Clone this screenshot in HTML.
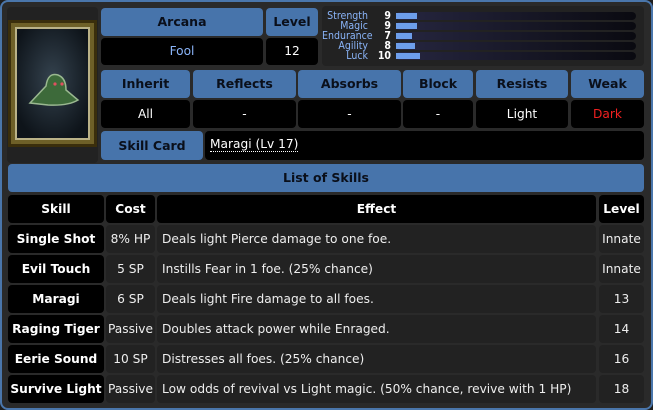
<!DOCTYPE html>
<html><head><style>
*{box-sizing:border-box;margin:0;padding:0}
body{width:653px;height:410px;background:#1e1e1e;font-family:"DejaVu Sans","Liberation Sans",sans-serif;font-size:12.2px;position:relative;overflow:hidden}
.frame{position:absolute;left:0;top:0;width:653px;height:410px;border:2px solid #4a76ab;border-radius:8px;background:#2a2a2a}
.c{position:absolute;border-radius:4px;display:flex;align-items:center;justify-content:center;text-align:center;padding-bottom:1px}
.h{background:#4774ab;color:#0a0f1a;font-weight:bold;font-size:12.5px}
.b{background:#000;color:#fff}
.d{background:#222;color:#eee}
.l{justify-content:flex-start;padding-left:5px}
.st{position:absolute;font-family:"DejaVu Sans Condensed","Liberation Sans Narrow",sans-serif;font-size:10.5px;color:#8ab4f8;line-height:10px}
.bar{position:absolute;left:396px;width:240px;height:8px;border-radius:4px;background:linear-gradient(90deg,#262640,#0a0a10)}
.bar i{position:absolute;left:0;top:1px;height:6px;background:#6d9eeb}
</style></head><body>
<div class="frame"></div>
<div class="c" style="left:7px;top:7px;width:91px;height:156px;background:#222"></div>
<svg style="position:absolute;left:8px;top:20px" width="89" height="127">
<defs><radialGradient id="g" cx="50%" cy="45%" r="60%"><stop offset="0" stop-color="#34424e"/><stop offset="1" stop-color="#0e141a"/></radialGradient></defs>
<rect width="89" height="127" fill="#3a2e0c"/><rect x="3" y="3" width="83" height="121" fill="#6e6028"/>
<rect x="7" y="7" width="75" height="113" fill="#bab288"/><rect x="9" y="9" width="71" height="109" fill="url(#g)"/>
<path d="M22 83 L38 66 Q40 52 50 55 Q58 58 58 70 L70 80 Q60 86 40 85 Z" fill="#3d6a3a" stroke="#9ab890" stroke-width="1.5"/>
<circle cx="47" cy="64" r="1.6" fill="#e05060"/><circle cx="54" cy="64" r="1.6" fill="#e05060"/>
</svg>
<div class="c h" style="left:101px;top:8px;width:162px;height:28px">Arcana</div>
<div class="c h" style="left:266px;top:8px;width:52px;height:28px">Level</div>
<div class="c b" style="left:101px;top:38px;width:162px;height:27px;color:#8ab4f8">Fool</div>
<div class="c b" style="left:266px;top:38px;width:52px;height:27px">12</div>
<div class="c" style="left:322px;top:6px;width:322px;height:60px;background:#222"></div>
<div class="st" style="left:322px;top:11px;width:46px;text-align:right">Strength<br>Magic<br>Endurance<br>Agility<br>Luck</div>
<div class="st" style="left:375px;top:11px;width:16px;text-align:right;color:#fff;font-weight:bold">9<br>9<br>7<br>8<br>10</div>
<div class="bar" style="top:12px"><i style="width:21px"></i></div>
<div class="bar" style="top:22px"><i style="width:21px"></i></div>
<div class="bar" style="top:32px"><i style="width:16px"></i></div>
<div class="bar" style="top:42px"><i style="width:19px"></i></div>
<div class="bar" style="top:52px"><i style="width:24px"></i></div>
<div class="c h" style="left:101px;top:70px;width:89px;height:28px">Inherit</div>
<div class="c h" style="left:193px;top:70px;width:103px;height:28px">Reflects</div>
<div class="c h" style="left:298px;top:70px;width:103px;height:28px">Absorbs</div>
<div class="c h" style="left:403px;top:70px;width:70px;height:28px">Block</div>
<div class="c h" style="left:476px;top:70px;width:92px;height:28px">Resists</div>
<div class="c h" style="left:571px;top:70px;width:73px;height:28px">Weak</div>
<div class="c b" style="left:101px;top:100px;width:89px;height:28px">All</div>
<div class="c b" style="left:193px;top:100px;width:103px;height:28px">-</div>
<div class="c b" style="left:298px;top:100px;width:103px;height:28px">-</div>
<div class="c b" style="left:403px;top:100px;width:70px;height:28px">-</div>
<div class="c b" style="left:476px;top:100px;width:92px;height:28px">Light</div>
<div class="c b" style="left:571px;top:100px;width:73px;height:28px;color:#f02020">Dark</div>
<div class="c h" style="left:101px;top:131px;width:102px;height:29px">Skill Card</div>
<div class="c b l" style="left:205px;top:131px;width:439px;height:29px"><span style="border-bottom:1px dotted #fff;line-height:13px">Maragi (Lv 17)</span></div>
<div class="c h" style="left:8px;top:164px;width:636px;height:28px">List of Skills</div>
<div class="c b" style="left:8px;top:195px;width:96px;height:28px;font-weight:bold">Skill</div>
<div class="c b" style="left:106px;top:195px;width:49px;height:28px;font-weight:bold">Cost</div>
<div class="c b" style="left:157px;top:195px;width:439px;height:28px;font-weight:bold">Effect</div>
<div class="c b" style="left:599px;top:195px;width:45px;height:28px;font-weight:bold">Level</div>
<div class="c b" style="left:8px;top:225px;width:96px;height:28px;font-weight:bold">Single Shot</div>
<div class="c d" style="left:106px;top:225px;width:49px;height:28px">8% HP</div>
<div class="c d l" style="left:157px;top:225px;width:439px;height:28px">Deals light Pierce damage to one foe.</div>
<div class="c d" style="left:599px;top:225px;width:45px;height:28px">Innate</div>
<div class="c b" style="left:8px;top:255px;width:96px;height:28px;font-weight:bold">Evil Touch</div>
<div class="c d" style="left:106px;top:255px;width:49px;height:28px">5 SP</div>
<div class="c d l" style="left:157px;top:255px;width:439px;height:28px">Instills Fear in 1 foe. (25% chance)</div>
<div class="c d" style="left:599px;top:255px;width:45px;height:28px">Innate</div>
<div class="c b" style="left:8px;top:285px;width:96px;height:28px;font-weight:bold">Maragi</div>
<div class="c d" style="left:106px;top:285px;width:49px;height:28px">6 SP</div>
<div class="c d l" style="left:157px;top:285px;width:439px;height:28px">Deals light Fire damage to all foes.</div>
<div class="c d" style="left:599px;top:285px;width:45px;height:28px">13</div>
<div class="c b" style="left:8px;top:315px;width:96px;height:28px;font-weight:bold">Raging Tiger</div>
<div class="c d" style="left:106px;top:315px;width:49px;height:28px">Passive</div>
<div class="c d l" style="left:157px;top:315px;width:439px;height:28px">Doubles attack power while Enraged.</div>
<div class="c d" style="left:599px;top:315px;width:45px;height:28px">14</div>
<div class="c b" style="left:8px;top:345px;width:96px;height:28px;font-weight:bold">Eerie Sound</div>
<div class="c d" style="left:106px;top:345px;width:49px;height:28px">10 SP</div>
<div class="c d l" style="left:157px;top:345px;width:439px;height:28px">Distresses all foes. (25% chance)</div>
<div class="c d" style="left:599px;top:345px;width:45px;height:28px">16</div>
<div class="c b" style="left:8px;top:375px;width:96px;height:28px;font-weight:bold">Survive Light</div>
<div class="c d" style="left:106px;top:375px;width:49px;height:28px">Passive</div>
<div class="c d l" style="left:157px;top:375px;width:439px;height:28px">Low odds of revival vs Light magic. (50% chance, revive with 1 HP)</div>
<div class="c d" style="left:599px;top:375px;width:45px;height:28px">18</div>
</body></html>
